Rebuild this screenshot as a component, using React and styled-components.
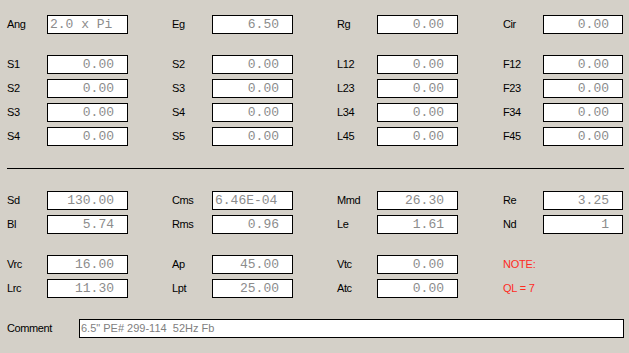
import React from "react";
import styled, { createGlobalStyle } from "styled-components";

const Global = createGlobalStyle`
  html, body { margin: 0; padding: 0; background: #d4d0c8; }
  #root { width: 629px; height: 353px; overflow: hidden; }
`;

const Page = styled.div`
  width: 629px;
  height: 353px;
  box-sizing: border-box;
  padding: 15px 0 0 7px;
  background: #d4d0c8;
  font-family: "Liberation Sans", Arial, sans-serif;
`;

const Block = styled.div`
  display: grid;
  grid-template-columns: 165px 165px 166px 120px;
  row-gap: 5px;
  margin-top: ${(p) => p.$mt || 0}px;
`;

const Field = styled.div`
  display: flex;
  align-items: center;
  height: 19px;
`;

const Label = styled.span`
  width: ${(p) => p.$w || 40}px;
  flex: none;
  font-size: 11px;
  letter-spacing: -0.4px;
  color: #000;
  line-height: 19px;
  white-space: nowrap;
`;

const Box = styled.div`
  box-sizing: border-box;
  width: 81px;
  height: 19px;
  border: 1px solid #000;
  background: #fff;
  font-family: "Liberation Mono", "Courier New", monospace;
  font-size: 13px;
  line-height: 17px;
  color: #8c8c8c;
  text-align: ${(p) => (p.$left ? "left" : "right")};
  padding: ${(p) => (p.$left ? "0 0 0 2px" : "0 13px 0 0")};
  white-space: pre;
  overflow: hidden;
`;

const Note = styled.span`
  font-size: 11px;
  letter-spacing: -0.2px;
  color: #ff2b1f;
  line-height: 19px;
`;

const Divider = styled.div`
  width: 617px;
  height: 1px;
  background: #000;
  margin-top: ${(p) => p.$mt}px;
`;

const CommentRow = styled.div`
  display: flex;
  align-items: center;
  margin-top: 21px;
`;

const CommentBox = styled.div`
  box-sizing: border-box;
  width: 545px;
  height: 19px;
  border: 1px solid #000;
  background: #fff;
  font-size: 11px;
  letter-spacing: 0;
  line-height: 17px;
  color: #808080;
  padding-left: 1px;
  white-space: pre;
`;

const F = ({ label, value, left }) => (
  <Field>
    <Label>{label}</Label>
    <Box $left={left}>{value}</Box>
  </Field>
);

export default function App() {
  return (
    <>
      <Global />
      <Page>
        <Block>
          <F label="Ang" value="2.0 x Pi" left />
          <F label="Eg" value="6.50" />
          <F label="Rg" value="0.00" />
          <F label="Cir" value="0.00" />
        </Block>
        <Block $mt={21}>
          <F label="S1" value="0.00" />
          <F label="S2" value="0.00" />
          <F label="L12" value="0.00" />
          <F label="F12" value="0.00" />
          <F label="S2" value="0.00" />
          <F label="S3" value="0.00" />
          <F label="L23" value="0.00" />
          <F label="F23" value="0.00" />
          <F label="S3" value="0.00" />
          <F label="S4" value="0.00" />
          <F label="L34" value="0.00" />
          <F label="F34" value="0.00" />
          <F label="S4" value="0.00" />
          <F label="S5" value="0.00" />
          <F label="L45" value="0.00" />
          <F label="F45" value="0.00" />
        </Block>
        <Divider $mt={22} />
        <Block $mt={22}>
          <F label="Sd" value="130.00" />
          <F label="Cms" value="6.46E-04" left />
          <F label="Mmd" value="26.30" />
          <F label="Re" value="3.25" />
          <F label="Bl" value="5.74" />
          <F label="Rms" value="0.96" />
          <F label="Le" value="1.61" />
          <F label="Nd" value="1" />
        </Block>
        <Block $mt={21}>
          <F label="Vrc" value="16.00" />
          <F label="Ap" value="45.00" />
          <F label="Vtc" value="0.00" />
          <Field>
            <Note>NOTE:</Note>
          </Field>
          <F label="Lrc" value="11.30" />
          <F label="Lpt" value="25.00" />
          <F label="Atc" value="0.00" />
          <Field>
            <Note>QL = 7</Note>
          </Field>
        </Block>
        <CommentRow>
          <Label $w={72}>Comment</Label>
          <CommentBox>{'6.5" PE# 299-114  52Hz Fb'}</CommentBox>
        </CommentRow>
      </Page>
    </>
  );
}
